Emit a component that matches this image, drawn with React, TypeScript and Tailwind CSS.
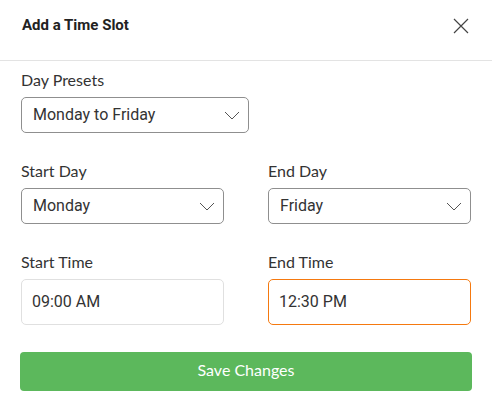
import React from "react";

function Chevron() {
  return (
    <svg width="16" height="9" viewBox="0 0 16 9" fill="none" className="shrink-0">
      <path d="M1 1l7 7 7-7" stroke="#555" strokeWidth="1" />
    </svg>
  );
}

function Select({ value, className = "" }: { value: string; className?: string }) {
  return (
    <div
      className={`flex h-[36px] items-center justify-between rounded-[5px] border border-[#8f8f8f] bg-white pl-[11px] pr-[8px] ${className}`}
    >
      <span className="text-[16px] text-[#333] font-['Roboto',sans-serif]">{value}</span>
      <Chevron />
    </div>
  );
}

function Label({ children }: { children: React.ReactNode }) {
  return (
    <div className="mb-[5px] h-[24px] leading-[24px] text-[16px] text-[#333] font-['Lato',sans-serif]">
      {children}
    </div>
  );
}

export default function App() {
  return (
    <div className="w-[492px] h-[403px] bg-white font-['Lato',sans-serif]">
      <div className="flex h-[61px] items-center justify-between border-b border-[#e3e3e3] pl-[22px] pr-[22px]">
        <div className="mt-[-9px] text-[15px] font-bold text-[#222] font-['Roboto',sans-serif]">
          Add a Time Slot
        </div>
        <svg width="16" height="16" viewBox="0 0 16 16" className="mt-[-9px] mr-[1px]">
          <path d="M1 1L15 15M15 1L1 15" stroke="#444" strokeWidth="1.2" />
        </svg>
      </div>
      <div className="px-[21px] pt-[7px]">
        <Label>Day Presets</Label>
        <Select value="Monday to Friday" className="w-[228px]" />
        <div className="mt-[26px] grid grid-cols-2 gap-x-[44px]">
          <div>
            <Label>Start Day</Label>
            <Select value="Monday" />
          </div>
          <div>
            <Label>End Day</Label>
            <Select value="Friday" />
          </div>
        </div>
        <div className="mt-[26px] grid grid-cols-2 gap-x-[44px]">
          <div>
            <Label>Start Time</Label>
            <div className="flex h-[46px] items-center rounded-[5px] border border-[#e0e0e0] pl-[10px] text-[16px] text-[#333] font-['Roboto',sans-serif]">
              09:00 AM
            </div>
          </div>
          <div>
            <Label>End Time</Label>
            <div className="flex h-[46px] items-center rounded-[5px] border border-[#f5790f] pl-[10px] text-[16px] text-[#333] font-['Roboto',sans-serif]">
              12:30 PM
            </div>
          </div>
        </div>
        <button className="mt-[27px] ml-[-1px] flex h-[39px] w-[452px] items-center justify-center rounded-[4px] bg-[#5cb85c] pb-[3px] text-[16px] text-white font-['Lato',sans-serif]">
          Save Changes
        </button>
      </div>
    </div>
  );
}
